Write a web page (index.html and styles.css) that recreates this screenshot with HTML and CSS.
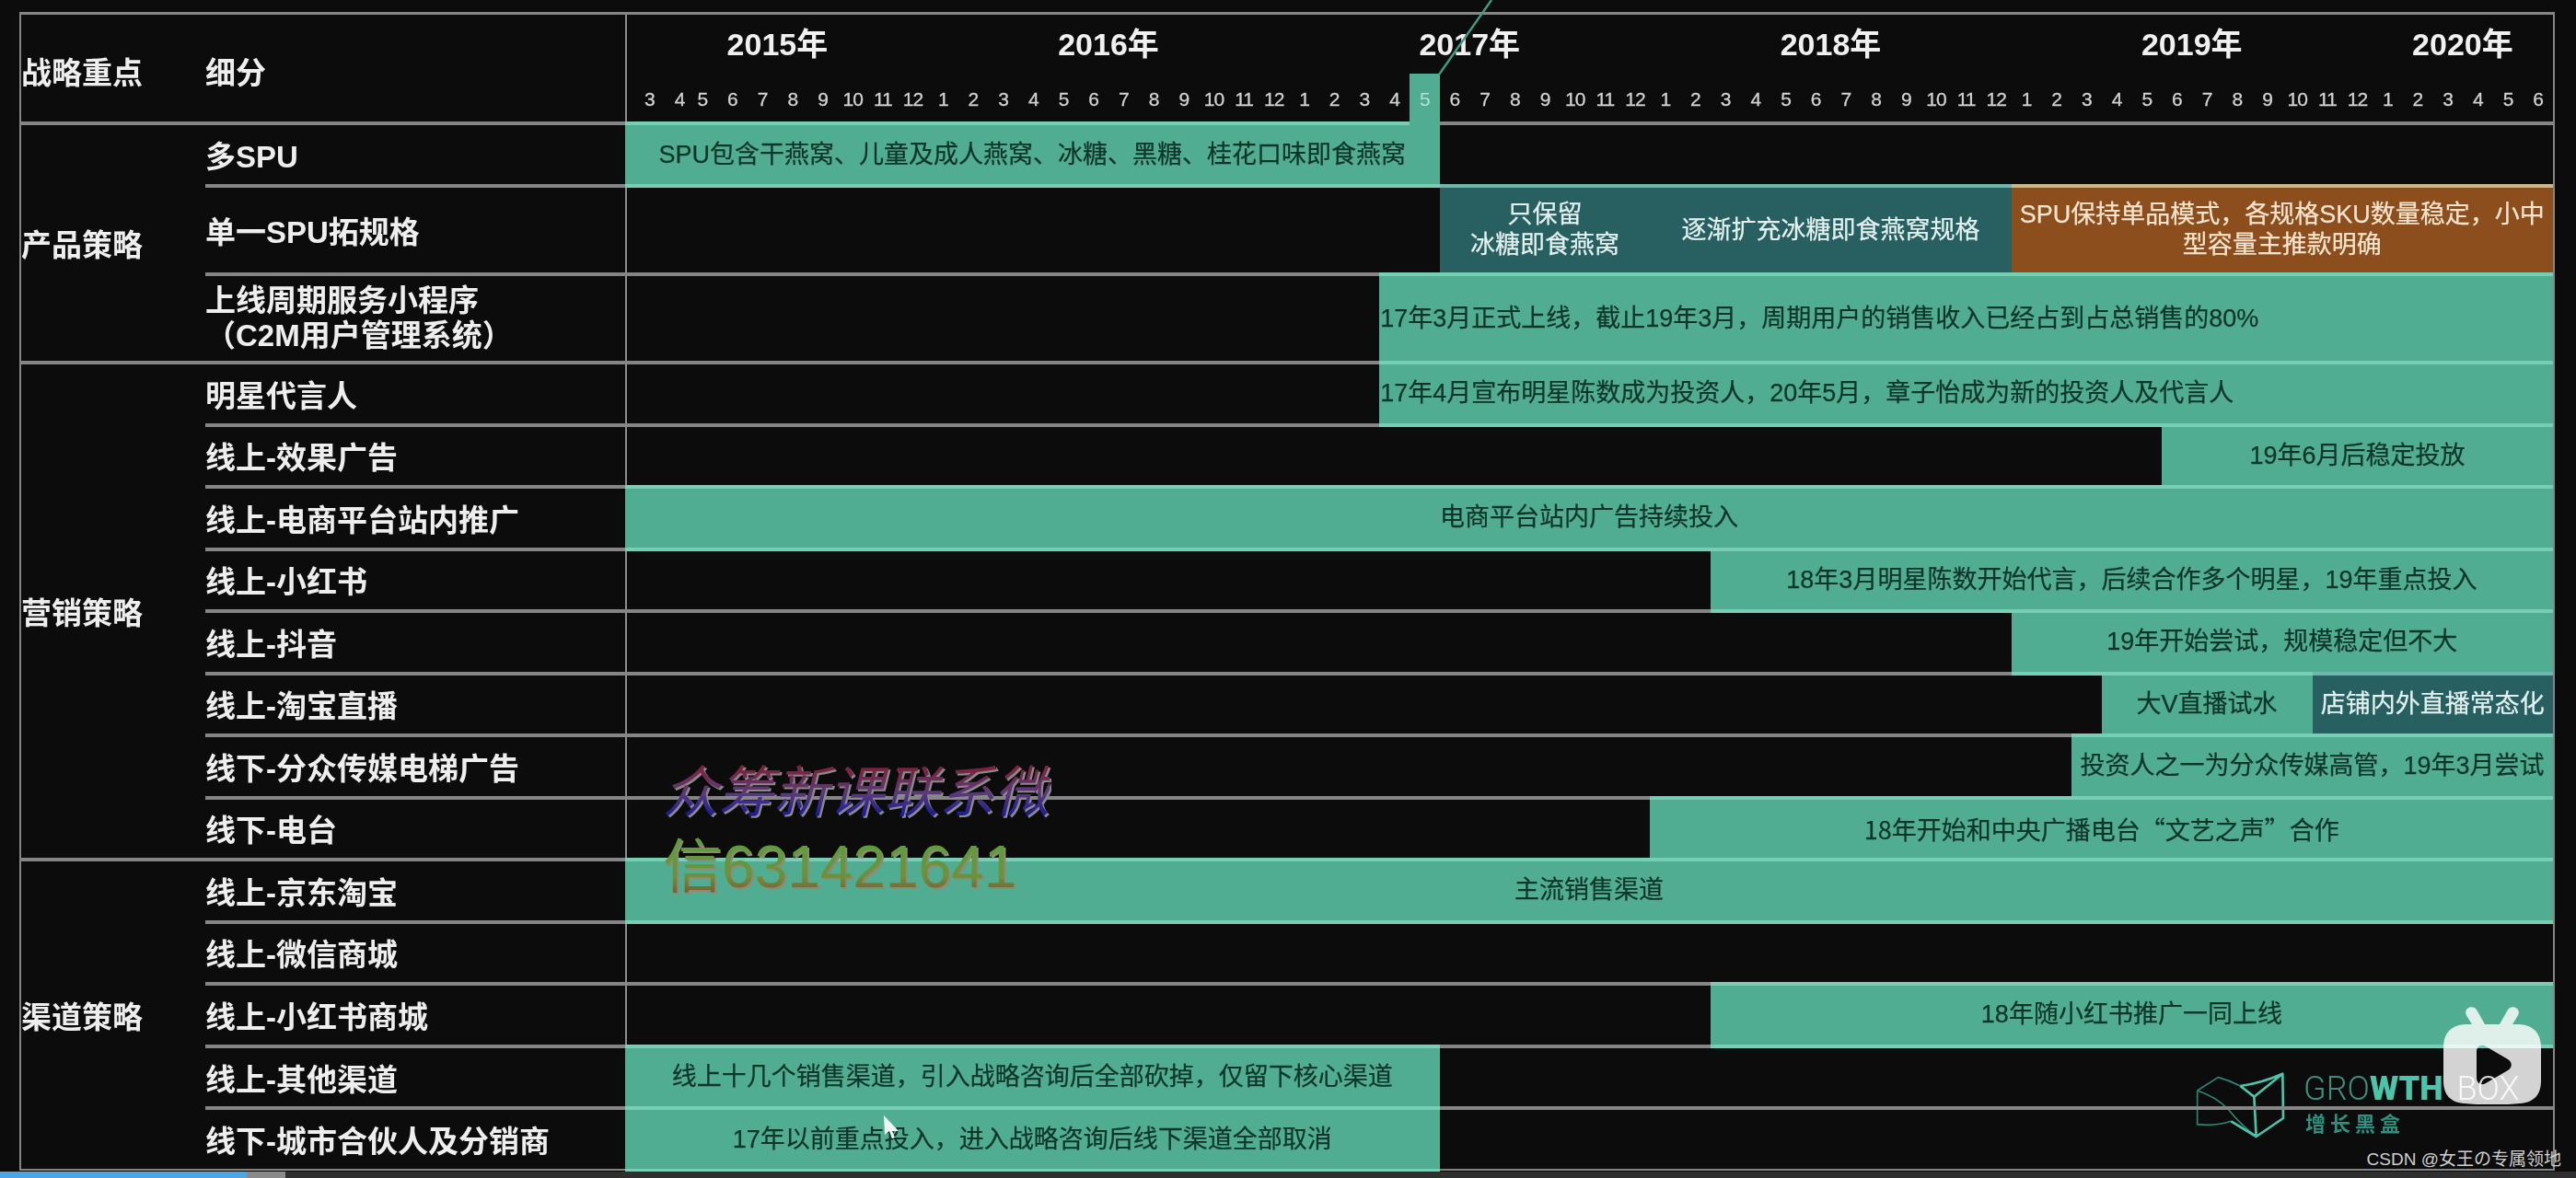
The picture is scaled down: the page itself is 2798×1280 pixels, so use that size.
FILE: index.html
```html
<!DOCTYPE html>
<html lang="zh-CN">
<head>
<meta charset="utf-8">
<title>战略重点</title>
<link rel="stylesheet" href="styles.css">
</head>
<body>
<div class="screen">
  <div class="logo">
    <svg class="logo-mark" width="104" height="100" viewBox="0 0 312 300">
      <path d="M20 105 L88 62 Q125 72 160 90 M20 105 L20 215 Q80 222 130 205 M20 105 Q80 125 120 165 Q160 215 212 255" fill="none" stroke="#2f8574" stroke-width="5"/>
      <path d="M160 90 L205 125 L298 50 L300 195 L212 255 L205 125 M160 90 Q230 80 298 50 M130 205 L212 255" fill="none" stroke="#4cc4ac" stroke-width="8" stroke-linejoin="round"/>
    </svg>
    <div class="logo-text">
      <div class="logo-en"><span class="thin">GRO</span><span class="bold">WTH</span><span class="faint">BOX</span></div>
      <div class="logo-cn">增长黑盒</div>
    </div>
  </div>

  <div class="table">
    <div class="head">
      <div class="head-label col-a">战略重点</div>
      <div class="head-label col-b">细分</div>
      <div class="timeline head-time">
        <div class="year y15">2015年</div>
        <div class="year y16">2016年</div>
        <div class="year y17">2017年</div>
        <div class="year y18">2018年</div>
        <div class="year y19">2019年</div>
        <div class="year y20">2020年</div>
        <span class="m m-off">3</span><span class="m m-off">4</span><span class="m">5</span><span class="m">6</span><span class="m">7</span><span class="m">8</span><span class="m">9</span><span class="m">10</span><span class="m">11</span><span class="m">12</span>
        <span class="m">1</span><span class="m">2</span><span class="m">3</span><span class="m">4</span><span class="m">5</span><span class="m">6</span><span class="m">7</span><span class="m">8</span><span class="m">9</span><span class="m">10</span><span class="m">11</span><span class="m">12</span>
        <span class="m">1</span><span class="m">2</span><span class="m">3</span><span class="m">4</span><span class="m m-on">5</span><span class="m">6</span><span class="m">7</span><span class="m">8</span><span class="m">9</span><span class="m">10</span><span class="m">11</span><span class="m">12</span>
        <span class="m">1</span><span class="m">2</span><span class="m">3</span><span class="m">4</span><span class="m">5</span><span class="m">6</span><span class="m">7</span><span class="m">8</span><span class="m">9</span><span class="m">10</span><span class="m">11</span><span class="m">12</span>
        <span class="m">1</span><span class="m">2</span><span class="m">3</span><span class="m">4</span><span class="m">5</span><span class="m">6</span><span class="m">7</span><span class="m">8</span><span class="m">9</span><span class="m">10</span><span class="m">11</span><span class="m">12</span>
        <span class="m">1</span><span class="m">2</span><span class="m">3</span><span class="m">4</span><span class="m">5</span><span class="m">6</span>
      </div>
    </div>

    <section class="section s-product">
      <div class="section-label">产品策略</div>
      <div class="rows">
        <div class="row row-s"><div class="name">多SPU</div><div class="timeline"><div class="bar green c0-27">SPU包含干燕窝、儿童及成人燕窝、冰糖、黑糖、桂花口味即食燕窝</div></div></div>
        <div class="row row-l"><div class="name">单一SPU拓规格</div><div class="timeline"><div class="bar teal c27-34">只保留<br>冰糖即食燕窝</div><div class="bar teal c34-46">逐渐扩充冰糖即食燕窝规格</div><div class="bar brown c46-64">SPU保持单品模式，各规格SKU数量稳定，小中<br>型容量主推款明确</div></div></div>
        <div class="row row-last"><div class="name name-two">上线周期服务小程序<br>（C2M用户管理系统）</div><div class="timeline"><div class="bar green c25-64 left">17年3月正式上线，截止19年3月，周期用户的销售收入已经占到占总销售的80%</div></div></div>
      </div>
    </section>

    <section class="section s-marketing">
      <div class="section-label">营销策略</div>
      <div class="rows">
        <div class="row"><div class="name">明星代言人</div><div class="timeline"><div class="bar green c25-64 left">17年4月宣布明星陈数成为投资人，20年5月，章子怡成为新的投资人及代言人</div></div></div>
        <div class="row"><div class="name">线上-效果广告</div><div class="timeline"><div class="bar green c51-64">19年6月后稳定投放</div></div></div>
        <div class="row"><div class="name">线上-电商平台站内推广</div><div class="timeline"><div class="bar green c0-64">电商平台站内广告持续投入</div></div></div>
        <div class="row"><div class="name">线上-小红书</div><div class="timeline"><div class="bar green c36-64">18年3月明星陈数开始代言，后续合作多个明星，19年重点投入</div></div></div>
        <div class="row"><div class="name">线上-抖音</div><div class="timeline"><div class="bar green c46-64">19年开始尝试，规模稳定但不大</div></div></div>
        <div class="row"><div class="name">线上-淘宝直播</div><div class="timeline"><div class="bar green c49-56">大V直播试水</div><div class="bar teal c56-64">店铺内外直播常态化</div></div></div>
        <div class="row"><div class="name">线下-分众传媒电梯广告</div><div class="timeline"><div class="bar green c48-64">投资人之一为分众传媒高管，19年3月尝试</div></div></div>
        <div class="row row-last"><div class="name">线下-电台</div><div class="timeline"><div class="bar green c34-64 cjk">18年开始和中央广播电台“文艺之声”合作</div></div></div>
      </div>
    </section>

    <section class="section s-channel">
      <div class="section-label">渠道策略</div>
      <div class="rows">
        <div class="row"><div class="name">线上-京东淘宝</div><div class="timeline"><div class="bar green c0-64">主流销售渠道</div></div></div>
        <div class="row"><div class="name">线上-微信商城</div><div class="timeline"></div></div>
        <div class="row"><div class="name">线上-小红书商城</div><div class="timeline"><div class="bar green c36-64">18年随小红书推广一同上线</div></div></div>
        <div class="row"><div class="name">线上-其他渠道</div><div class="timeline"><div class="bar green c0-27">线上十几个销售渠道，引入战略咨询后全部砍掉，仅留下核心渠道</div></div></div>
        <div class="row row-last"><div class="name">线下-城市合伙人及分销商</div><div class="timeline"><div class="bar green c0-27">17年以前重点投入，进入战略咨询后线下渠道全部取消</div></div></div>
      </div>
    </section>
  </div>

  <svg class="diagonal" width="70" height="82" viewBox="0 0 70 82"><path d="M2 81 L59 0" stroke="#3f9c84" stroke-width="2.4" fill="none"/></svg>

  <div class="stamp">
    <div class="stamp-one">众筹新课联系微</div>
    <div class="stamp-two">信631421641</div>
  </div>

  <svg class="tv" width="108" height="106" viewBox="0 0 108 106">
    <path fill-rule="evenodd" fill="#fff" fill-opacity=".82" d="M27 2 C30 -1 35 0 37 3 L46 19 L62 19 L71 3 C73 0 78 -1 81 2 C84 5 83 8 81 11 L76 19 L84 19 C99 20 107 29 107 44 L107 80 C107 96 99 104 84 105 C64 107 44 107 24 105 C9 104 1 96 1 80 L1 44 C1 29 9 20 24 19 L32 19 L27 11 C25 8 24 5 27 2 Z M37 49 C37 43 42 40 47 43 L71 57 C76 60 76 66 71 69 L47 83 C42 86 37 83 37 77 Z"/>
  </svg>

  <svg class="cursor" width="20" height="28" viewBox="0 0 20 28"><path d="M1 1 L2 22 L7 18 L10 26 L13 25 L10 18 L17 18 Z" fill="#eef4f2"/></svg>

  <div class="credit">CSDN @女王の专属领地</div>

  <div class="progress"><div class="played"></div><div class="buffered"></div></div>
</div>
</body>
</html>
```

FILE: styles.css
```css
* { box-sizing: border-box; }
html, body { margin: 0; padding: 0; background: #0c0c0c; }
body {
  font-family: "Liberation Sans", "Noto Sans CJK SC", sans-serif;
  overflow: hidden;
}
.screen {
  position: relative;
  width: 2798px;
  height: 1280px;
  padding: 13px 0 0 21px;
  background: #0c0c0c;
  overflow: hidden;
}
.table {
  width: 2754px;
  height: 1259px;
  border: 2px solid #858585;
  border-top-width: 3px;
  filter: blur(.6px);
  display: flex;
  flex-direction: column;
}
.head {
  display: flex;
  height: 120px;
  flex: none;
  border-bottom: 4px solid #858585;
}
.head-label {
  font-size: 33px;
  font-weight: 700;
  color: #eee;
  align-self: center;
  padding-top: 6px;
}
.col-a { width: 200px; }
.col-b { width: 456px; }
.timeline {
  flex: 1;
  display: grid;
  grid-template-columns: repeat(64, 1fr);
  border-left: 2px solid #8c8c8c;
  min-width: 0;
}
.head-time {
  grid-template-rows: 64px 52px;
  position: relative;
}
.year {
  grid-row: 1;
  font-size: 34px;
  font-weight: 700;
  line-height: 64px;
  text-align: center;
  color: #f0f0f0;
}
.y15 { grid-column: 1 / 11; }
.y16 { grid-column: 11 / 23; }
.y17 { grid-column: 23 / 35; }
.y18 { grid-column: 35 / 47; }
.y19 { grid-column: 47 / 59; }
.y20 { grid-column: 59 / 65; }
.m {
  grid-row: 2;
  font-size: 21px;
  line-height: 56px;
  text-align: center;
  color: #d2d2d2;
  white-space: nowrap;
  letter-spacing: -1px;
  -webkit-text-stroke: .3px #d2d2d2;
}
.m-off { padding-left: 16px; }
.m-on {
  background: #50ad91;
  color: #b4e0d2;
  -webkit-text-stroke: 0;
  margin-bottom: -4px;
}

.section {
  display: flex;
  flex: none;
  border-bottom: 4px solid #858585;
}
.s-product { height: 260px; }
.s-marketing { height: 540px; }
.s-channel { flex: 1 1 0; border-bottom: 0; min-height: 0; }
.section-label {
  width: 200px;
  flex: none;
  align-self: center;
  font-size: 33px;
  font-weight: 700;
  color: #eee;
}
.rows { flex: 1; display: flex; flex-direction: column; min-width: 0; }
.row {
  flex: 1 1 0;
  display: flex;
  min-height: 0;
  border-bottom: 4px solid #858585;
}
.row-s { flex: 0 0 68px; }
.row-l { flex: 0 0 96px; }
.row-last { border-bottom: 0; }
.name {
  width: 456px;
  flex: none;
  align-self: center;
  font-size: 33px;
  font-weight: 700;
  color: #eee;
  white-space: nowrap;
}
.name-two { line-height: 38px; }

.bar {
  display: flex;
  align-items: center;
  justify-content: center;
  text-align: center;
  font-size: 27px;
  line-height: 33px;
  margin: -4px 0;
  white-space: nowrap;
  min-width: 0;
  border-top: 4px solid transparent;
  border-bottom: 4px solid transparent;
  -webkit-text-stroke: .25px currentColor;
}
.green { background: #50ad91; color: #0f3529; border-color: #78ceb4; }
.teal { background: #285f60; color: #e2f1ef; border-color: #6fb5ad; }
.brown { background: #8c4e1c; color: #f6e4ce; border-color: #c8b68c; }
.left { justify-content: flex-start; padding-left: 1px; }
.cjk { font-family: "Noto Sans CJK SC", sans-serif; }

.c0-27 { grid-column: 1 / 28; margin-left: -2px; }
.c0-64 { grid-column: 1 / 65; margin-left: -2px; }
.c25-64 { grid-column: 26 / 65; }
.c27-34 { grid-column: 28 / 35; }
.c34-46 { grid-column: 35 / 47; }
.c34-64 { grid-column: 35 / 65; }
.c36-64 { grid-column: 37 / 65; }
.c46-64 { grid-column: 47 / 65; }
.c48-64 { grid-column: 49 / 65; }
.c49-56 { grid-column: 50 / 57; }
.c51-64 { grid-column: 52 / 65; }
.c56-64 { grid-column: 57 / 65; }

.diagonal { position: absolute; left: 1561px; top: 0; filter: blur(.4px); }

.stamp { position: absolute; left: 720px; top: 826px; filter: blur(.6px); }
.stamp-one, .stamp-two {
  -webkit-background-clip: text;
  background-clip: text;
  color: transparent;
  white-space: nowrap;
}
.stamp-one {
  font-size: 60px;
  line-height: 72px;
  font-style: italic;
  background-image: linear-gradient(180deg, #7a2440 15%, #5a3a7a 50%, #1c1c98 82%);
  filter: drop-shadow(2px 2px 0 #8a8a8a);
}
.stamp-two {
  margin-top: 8px;
  font-size: 64px;
  line-height: 72px;
  background-image: linear-gradient(180deg, #5f9c3c 20%, #6f8f3c 65%, #7a5a34 90%);
  filter: drop-shadow(2px 2px 0 #8f8a76);
}

.logo {
  position: absolute;
  left: 2380px;
  top: 1150px;
  display: flex;
  gap: 18px;
  filter: blur(.6px);
}
.logo-text { margin-top: 13px; }
.logo-en {
  font-family: "Roboto", sans-serif;
  font-size: 36px;
  line-height: 40px;
  white-space: nowrap;
}
.thin { color: #3f8d7c; font-weight: 300; }
.bold { color: #4cc4ac; font-weight: 900; }
.faint { color: #d8d8d8; font-weight: 300; margin-left: 15px; }
.logo-cn {
  margin-top: 7px;
  font-size: 22px;
  line-height: 24px;
  letter-spacing: 5px;
  font-weight: 700;
  color: #2f8f7e;
  padding-left: 2px;
}

.tv { position: absolute; left: 2653px; top: 1094px; }
.cursor { position: absolute; left: 959px; top: 1211px; filter: blur(.5px); }

.credit {
  position: absolute;
  right: 16px;
  top: 1248px;
  font-size: 19px;
  line-height: 24px;
  color: #cfcfcf;
  white-space: nowrap;
}

.progress {
  position: absolute;
  left: 0;
  right: 0;
  bottom: 0;
  height: 7px;
  background: #2f2f2f;
  display: flex;
}
.played { width: 268px; background: #4da6e0; }
.buffered { width: 42px; background: #8a8a8a; }
```
